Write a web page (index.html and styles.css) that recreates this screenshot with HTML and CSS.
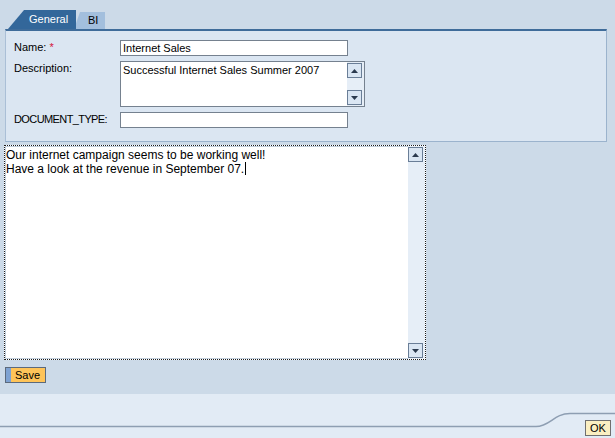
FILE: index.html
```html
<!DOCTYPE html>
<html lang="en">
<head>
    <meta charset="UTF-8">
    <title>Document Properties</title>
    <link rel="stylesheet" href="styles.css">
</head>
<body>
    <div class="page">
        <div class="tabs">
            <div class="tab tab-active">General</div>
            <div class="tab tab-bi">BI</div>
        </div>

        <section class="panel">
            <div class="form-grid">
                <label class="field-label">Name: <span class="req">*</span></label>
                <div class="input input-short">Internet Sales</div>

                <label class="field-label">Description:</label>
                <div class="input textbox">
                    <div class="textbox-text">Successful Internet Sales Summer 2007</div>
                    <div class="scrollbar">
                        <span class="scroll-btn"><svg width="7" height="4" viewBox="0 0 7 4"><path d="M0 4 L3.5 0 L7 4 Z" fill="#2b3a4e"/></svg></span>
                        <span class="scroll-btn"><svg width="7" height="4" viewBox="0 0 7 4"><path d="M0 0 L3.5 4 L7 0 Z" fill="#2b3a4e"/></svg></span>
                    </div>
                </div>

                <label class="field-label label-tight">DOCUMENT_TYPE:</label>
                <div class="input input-short"></div>
            </div>
        </section>

        <div class="editor">
            <div class="editor-text">Our internet campaign seems to be working well!<br>Have a look at the revenue in September 07.<span class="caret"></span></div>
            <div class="scrollbar scrollbar-big">
                <span class="scroll-btn"><svg width="7" height="4" viewBox="0 0 7 4"><path d="M0 4 L3.5 0 L7 4 Z" fill="#2b3a4e"/></svg></span>
                <span class="scroll-btn"><svg width="7" height="4" viewBox="0 0 7 4"><path d="M0 0 L3.5 4 L7 0 Z" fill="#2b3a4e"/></svg></span>
            </div>
        </div>

        <div class="actions">
            <button class="btn-save"><span class="btn-edge"></span>Save</button>
        </div>

        <footer class="footer">
            <svg class="footer-line" width="615" height="44" viewBox="0 0 615 44">
                <path d="M0 32.5 H536 C550 32.5 554 19.5 570 19.5 H615" fill="none" stroke="#8e9eb2" stroke-width="1.5"/>
            </svg>
            <button class="btn-ok">OK</button>
        </footer>
    </div>
</body>
</html>
```

FILE: styles.css
```css
body {
    margin: 0;
    font-family: "Liberation Sans", Arial, sans-serif;
    font-size: 11px;
    color: #000;
    background: #ccdae8;
}
.page {
    display: flex;
    flex-direction: column;
    width: 615px;
    height: 438px;
    overflow: hidden;
}
.tabs {
    display: flex;
    align-items: flex-end;
    height: 19px;
    padding: 10px 0 0 8px;
}
.tab {
    height: 18px;
    line-height: 19px;
    font-size: 11px;
}
.tab-active {
    width: 68px;
    height: 19px;
    padding-left: 21px;
    box-sizing: border-box;
    background: #33679a;
    color: #fff;
    clip-path: polygon(16px 0, 100% 0, 100% 100%, 0 100%);
    position: relative;
    z-index: 1;
}
.tab-bi {
    width: 31px;
    height: 17px;
    line-height: 17px;
    margin-left: -2px;
    padding-left: 14px;
    box-sizing: border-box;
    background: #a3bfdd;
    clip-path: polygon(6px 0, 100% 0, 100% 100%, 0 100%);
}
.panel {
    margin-left: 5px;
    width: 602px;
    box-sizing: border-box;
    background: #dbe6f2;
    border-top: 2px solid #3f6c9a;
    border-left: 1px solid #aabfd6;
    border-right: 1px solid #9bb3cd;
    border-bottom: 1px solid #9bb3cd;
    padding: 9px 0 13px 8px;
}
.form-grid {
    display: grid;
    grid-template-columns: 106px auto;
    row-gap: 5px;
    align-items: start;
}
.field-label {
    padding-top: 1px;
    line-height: 12px;
}
.label-tight {
    letter-spacing: -0.6px;
}
.req {
    color: #d4103c;
}
.input {
    box-sizing: border-box;
    height: 16px;
    background: #fff;
    border: 1px solid #75818f;
    padding: 0 2px;
    line-height: 14px;
    white-space: nowrap;
}
.input-short {
    width: 228px;
}
.textbox {
    display: flex;
    width: 245px;
    height: 46px;
    padding: 0 0 0 2px;
}
.textbox-text {
    flex: 1;
    padding-top: 1px;
}
.scrollbar {
    display: flex;
    flex-direction: column;
    justify-content: space-between;
    width: 16px;
    padding: 1px 1px 1px 0;
    background: #e6eef7;
}
.scroll-btn {
    display: flex;
    align-items: center;
    justify-content: center;
    width: 15px;
    height: 15px;
    box-sizing: border-box;
    border: 1px solid #6a7e97;
    background: #dae6f3;
}
.editor {
    display: flex;
    margin: 3px 0 0 4px;
    width: 422px;
    height: 215px;
    box-sizing: border-box;
    border: 1px dotted #1c1c1c;
    box-shadow: inset 0 0 0 1px #c2cfdc;
    background: #fff;
}
.editor-text {
    flex: 1;
    padding: 2px 0 0 1px;
    font-size: 12px;
    line-height: 14px;
}
.caret {
    display: inline-block;
    width: 1px;
    height: 13px;
    margin-left: 1px;
    vertical-align: -2px;
    background: #000;
}
.scrollbar-big {
    padding: 1px 1px 1px 0;
}
.actions {
    padding: 7px 0 0 5px;
}
.btn-save {
    display: flex;
    align-items: center;
    width: 41px;
    height: 16px;
    padding: 0;
    border: 1px solid #5c6a7c;
    background: #ffc459;
    font-family: inherit;
    font-size: 11px;
    color: #000;
}
.btn-edge {
    width: 5px;
    height: 100%;
    margin-right: 4px;
    background: #7ea2d2;
}
.footer {
    display: grid;
    margin-top: auto;
    height: 44px;
    background: #e2ebf5;
}
.footer-line,
.btn-ok {
    grid-area: 1 / 1;
}
.btn-ok {
    justify-self: end;
    align-self: end;
    width: 26px;
    height: 16px;
    margin: 0 4px 2px 0;
    padding: 0;
    border: 1px solid #6f6f6f;
    background: #fbefc2;
    font-family: inherit;
    font-size: 11px;
    color: #000;
}
```
